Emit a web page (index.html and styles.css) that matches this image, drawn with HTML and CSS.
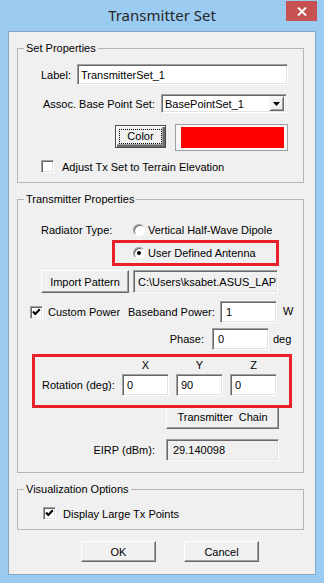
FILE: index.html
```html
<!DOCTYPE html>
<html lang="en">
<head>
    <meta charset="UTF-8">
    <meta name="viewport" content="width=device-width, initial-scale=1.0">
    <title>Transmitter Set</title>
    <link rel="stylesheet" href="styles.css">
</head>
<body>

<div class="window">
    <div class="titlebar">
        <span></span>
        <span class="title">Transmitter Set</span>
        <button class="close" aria-label="Close">
            <svg width="10" height="9" viewBox="0 0 10 9"><path d="M1 0.5 L9 8.5 M9 0.5 L1 8.5" stroke="#fff" stroke-width="2"/></svg>
        </button>
    </div>

    <div class="client">
        <fieldset class="group">
            <legend>Set Properties</legend>
            <div class="row row-name">
                <span class="lbl lbl-name">Label:</span>
                <input class="edit edit-name" type="text" value="TransmitterSet_1">
            </div>
            <div class="row row-base">
                <span class="lbl lbl-base">Assoc. Base Point Set:</span>
                <div class="combo">
                    <span class="combo-text">BasePointSet_1</span>
                    <span class="combo-arrow"><svg width="7" height="4" viewBox="0 0 7 4"><path d="M0 0 H7 L3.5 4 Z" fill="#000"/></svg></span>
                </div>
            </div>
            <div class="row row-color">
                <button class="btn btn-default btn-color"><span class="focus">Color</span></button>
                <div class="swatch"><div class="swatch-fill"></div></div>
            </div>
            <div class="row row-terrain">
                <span class="check"></span>
                <span class="check-text">Adjust Tx Set to Terrain Elevation</span>
            </div>
        </fieldset>

        <fieldset class="group group-tx">
            <legend>Transmitter Properties</legend>
            <div class="row row-radiator">
                <span class="lbl lbl-radiator">Radiator Type:</span>
                <span class="radio"></span>
                <span class="radio-text">Vertical Half-Wave Dipole</span>
            </div>
            <div class="highlight highlight-radio">
                <span class="radio checked"></span>
                <span class="radio-text">User Defined Antenna</span>
            </div>
            <div class="row row-import">
                <button class="btn btn-import">Import Pattern</button>
                <input class="edit readonly edit-path" type="text" value="C:\Users\ksabet.ASUS_LAPTOP\Documents" readonly>
            </div>
            <div class="row row-power">
                <div class="custom">
                    <span class="check checked"><svg width="11" height="11" viewBox="0 0 11 11"><path d="M2 4.5 L4.3 7 L8.8 2.3" stroke="#000" stroke-width="2" fill="none"/></svg></span>
                    <span class="check-text">Custom Power</span>
                </div>
                <span class="lbl lbl-power">Baseband Power:</span>
                <input class="edit edit-small" type="text" value="1">
                <span class="unit unit-w">W</span>
            </div>
            <div class="row row-phase">
                <span class="lbl lbl-phase">Phase:</span>
                <input class="edit edit-small" type="text" value="0">
                <span class="unit">deg</span>
            </div>
            <div class="highlight highlight-rot">
                <div class="axes">
                    <span>X</span>
                    <span>Y</span>
                    <span>Z</span>
                </div>
                <div class="row row-rot">
                    <span class="lbl lbl-rot">Rotation (deg):</span>
                    <input class="edit edit-rot" type="text" value="0">
                    <input class="edit edit-rot" type="text" value="90">
                    <input class="edit edit-rot" type="text" value="0">
                </div>
            </div>
            <div class="row row-chain">
                <button class="btn btn-chain">Transmitter&nbsp; Chain</button>
            </div>
            <div class="row row-eirp">
                <span class="lbl lbl-eirp">EIRP (dBm):</span>
                <input class="edit readonly edit-eirp" type="text" value="29.140098" readonly>
            </div>
        </fieldset>

        <fieldset class="group group-vis">
            <legend>Visualization Options</legend>
            <div class="row row-large">
                <span class="check checked"><svg width="11" height="11" viewBox="0 0 11 11"><path d="M2 4.5 L4.3 7 L8.8 2.3" stroke="#000" stroke-width="2" fill="none"/></svg></span>
                <span class="check-text">Display Large Tx Points</span>
            </div>
        </fieldset>

        <div class="actions">
            <button class="btn btn-action">OK</button>
            <button class="btn btn-action">Cancel</button>
        </div>
    </div>
</div>

</body>
</html>
```

FILE: styles.css
```css
body {
    margin: 0;
    background-color: #9ccbf2;
    font-family: 'Liberation Sans', Arial, sans-serif;
    font-size: 11px;
    color: #000;
}

.window {
    width: 324px;
    height: 583px;
    display: flex;
    flex-direction: column;
}

.titlebar {
    height: 31px;
    display: grid;
    grid-template-columns: 1fr auto 1fr;
}

.title {
    font-family: 'Noto Sans', sans-serif;
    font-size: 15px;
    line-height: 30px;
    color: #262626;
}

.close {
    justify-self: end;
    align-self: start;
    width: 31px;
    height: 20px;
    margin: 1px 7px 0 0;
    padding: 0;
    border: 0;
    background-color: #c75050;
    display: flex;
    align-items: center;
    justify-content: center;
}

.client {
    flex: 1;
    margin: 0 8px 8px;
    padding: 10px 0 0 8px;
    background-color: #f0f0f0;
    border: 1px solid #86a6c4;
}

.group {
    width: 287px;
    box-sizing: border-box;
    margin: 0;
    padding: 0 0 9px;
    min-width: 0;
    border: 1px solid #b5b5b5;
}

.group legend {
    margin-left: 6px;
    padding: 0 2px;
    line-height: 13px;
}

.group-tx {
    margin-top: 10px;
    padding-bottom: 11px;
}

.group-vis {
    margin-top: 10px;
}

.row {
    display: flex;
    align-items: center;
}

.lbl {
    flex: none;
    white-space: nowrap;
}

/* sunken edit boxes */
.edit {
    box-sizing: border-box;
    margin: 0;
    padding: 0 0 0 3px;
    font-family: inherit;
    font-size: 11px;
    color: #000;
    background-color: #fff;
    border: 1px solid;
    border-color: #a0a0a0 #fff #fff #a0a0a0;
    box-shadow: inset 1px 1px #696969, inset -1px -1px #e3e3e3;
    outline: none;
}

.edit.readonly {
    background-color: #f0f0f0;
}

/* raised push buttons */
.btn {
    box-sizing: border-box;
    margin: 0;
    padding: 0;
    font-family: inherit;
    font-size: 11px;
    color: #000;
    background-color: #f0f0f0;
    border: 1px solid;
    border-color: #fff #696969 #696969 #fff;
    box-shadow: inset -1px -1px #a0a0a0;
}

.btn-default {
    border: 1px solid #4a4a4a;
    box-shadow: inset 1px 1px #fff, inset -2px -2px #696969, inset -3px -3px #a0a0a0;
    padding: 3px;
}

.btn-default .focus {
    display: block;
    height: 100%;
    box-sizing: border-box;
    border: 1px dotted #000;
    line-height: 13px;
}

/* Set Properties */
.row-name {
    margin-top: 9px;
    height: 21px;
}

.lbl-name {
    margin-left: 23px;
    width: 36px;
}

.edit-name {
    width: 211px;
    height: 21px;
}

.row-base {
    margin-top: 9px;
    height: 19px;
}

.lbl-base {
    margin-left: 25px;
    width: 118px;
}

.combo {
    width: 126px;
    height: 19px;
    box-sizing: border-box;
    display: flex;
    align-items: center;
    background-color: #fff;
    border: 1px solid;
    border-color: #a0a0a0 #fff #fff #a0a0a0;
    box-shadow: inset 1px 1px #696969, inset -1px -1px #e3e3e3;
    padding: 2px 2px 2px 3px;
}

.combo-text {
    flex: 1;
}

.combo-arrow {
    width: 15px;
    height: 15px;
    box-sizing: border-box;
    display: flex;
    align-items: center;
    justify-content: center;
    background-color: #f0f0f0;
    border: 1px solid;
    border-color: #f0f0f0 #696969 #696969 #f0f0f0;
    box-shadow: inset 1px 1px #fff, inset -1px -1px #a0a0a0;
}

.row-color {
    margin-top: 11px;
    height: 27px;
    align-items: flex-start;
}

.btn-color {
    margin: 1px 0 0 97px;
    width: 51px;
    height: 23px;
}

.swatch {
    margin-left: 9px;
    width: 113px;
    height: 27px;
    box-sizing: border-box;
    border: 1px solid #a0a0a0;
    background-color: #f7f7f7;
    padding: 2px 3px 2px 5px;
}

.swatch-fill {
    height: 100%;
    background-color: #ff0000;
}

.row-terrain {
    margin-top: 9px;
    height: 13px;
}

.row-terrain .check {
    margin-left: 23px;
}

.check {
    flex: none;
    width: 13px;
    height: 13px;
    box-sizing: border-box;
    background-color: #fff;
    border: 1px solid;
    border-color: #a0a0a0 #fff #fff #a0a0a0;
    box-shadow: inset 1px 1px #696969, inset -1px -1px #e3e3e3;
    display: flex;
}

.check-text {
    margin-left: 8px;
}

/* Transmitter Properties */
.row-radiator {
    margin-top: 17px;
    height: 13px;
}

.lbl-radiator {
    margin-left: 23px;
    width: 92px;
}

.radio {
    flex: none;
    position: relative;
    width: 12px;
    height: 12px;
    box-sizing: border-box;
    border-radius: 50%;
    background-color: #fff;
    border: 1px solid;
    border-color: #a0a0a0 #fff #fff #a0a0a0;
    box-shadow: inset 1px 1px #696969;
}

.radio.checked::after {
    content: '';
    position: absolute;
    left: 3px;
    top: 3px;
    width: 4px;
    height: 4px;
    border-radius: 50%;
    background-color: #000;
}

.radio-text {
    margin-left: 3px;
}

.highlight {
    position: relative;
    z-index: 1;
    border: 3px solid #e8212b;
}

.highlight-radio {
    margin: 4px 0 0 94px;
    width: 167px;
    height: 26px;
    box-sizing: border-box;
    padding-left: 18px;
    display: flex;
    align-items: center;
}

.row-import {
    margin-top: 4px;
    height: 23px;
}

.btn-import {
    margin-left: 23px;
    width: 88px;
    height: 23px;
}

.edit-path {
    margin-left: 4px;
    width: 145px;
    height: 23px;
    padding-left: 4px;
}

.row-power {
    margin-top: 8px;
    height: 22px;
}

.custom {
    margin-left: 12px;
    width: 98px;
    display: flex;
    align-items: center;
}

.custom .check-text {
    margin-left: 5px;
}

.lbl-power {
    width: 92px;
}

.edit-small {
    width: 57px;
    height: 22px;
    padding-left: 5px;
}

.unit {
    margin-left: 4px;
}

.unit-w {
    margin-left: 6px;
    align-self: flex-start;
    margin-top: 4px;
}

.row-phase {
    margin-top: 5px;
    height: 22px;
}

.lbl-phase {
    width: 194px;
    padding-right: 8px;
    box-sizing: border-box;
    text-align: right;
}

.highlight-rot {
    margin: 4px 0 0 14px;
    width: 260px;
    height: 54px;
    box-sizing: border-box;
    padding: 2px 0 0 7px;
}

.axes {
    display: grid;
    grid-template-columns: 47px 47px 47px;
    column-gap: 7px;
    margin-left: 80px;
    height: 13px;
    line-height: 13px;
    text-align: center;
}

.row-rot {
    margin-top: 2px;
    height: 22px;
}

.lbl-rot {
    width: 80px;
}

.edit-rot {
    width: 47px;
    height: 22px;
    padding-left: 4px;
}

.row-rot .edit-rot + .edit-rot {
    margin-left: 7px;
}

.row-chain {
    margin-top: -3px;
}

.btn-chain {
    margin-left: 148px;
    width: 113px;
    height: 24px;
}

.row-eirp {
    margin-top: 10px;
    height: 22px;
}

.lbl-eirp {
    width: 148px;
    padding-right: 11px;
    box-sizing: border-box;
    text-align: right;
}

.edit-eirp {
    width: 113px;
    height: 22px;
    padding-left: 6px;
}

/* Visualization Options */
.row-large {
    margin-top: 11px;
    height: 13px;
}

.row-large .check {
    margin-left: 25px;
}

.row-large .check-text {
    margin-left: 7px;
}

.actions {
    display: flex;
    gap: 28px;
    margin: 11px 0 0 64px;
}

.btn-action {
    width: 75px;
    height: 21px;
}
```
